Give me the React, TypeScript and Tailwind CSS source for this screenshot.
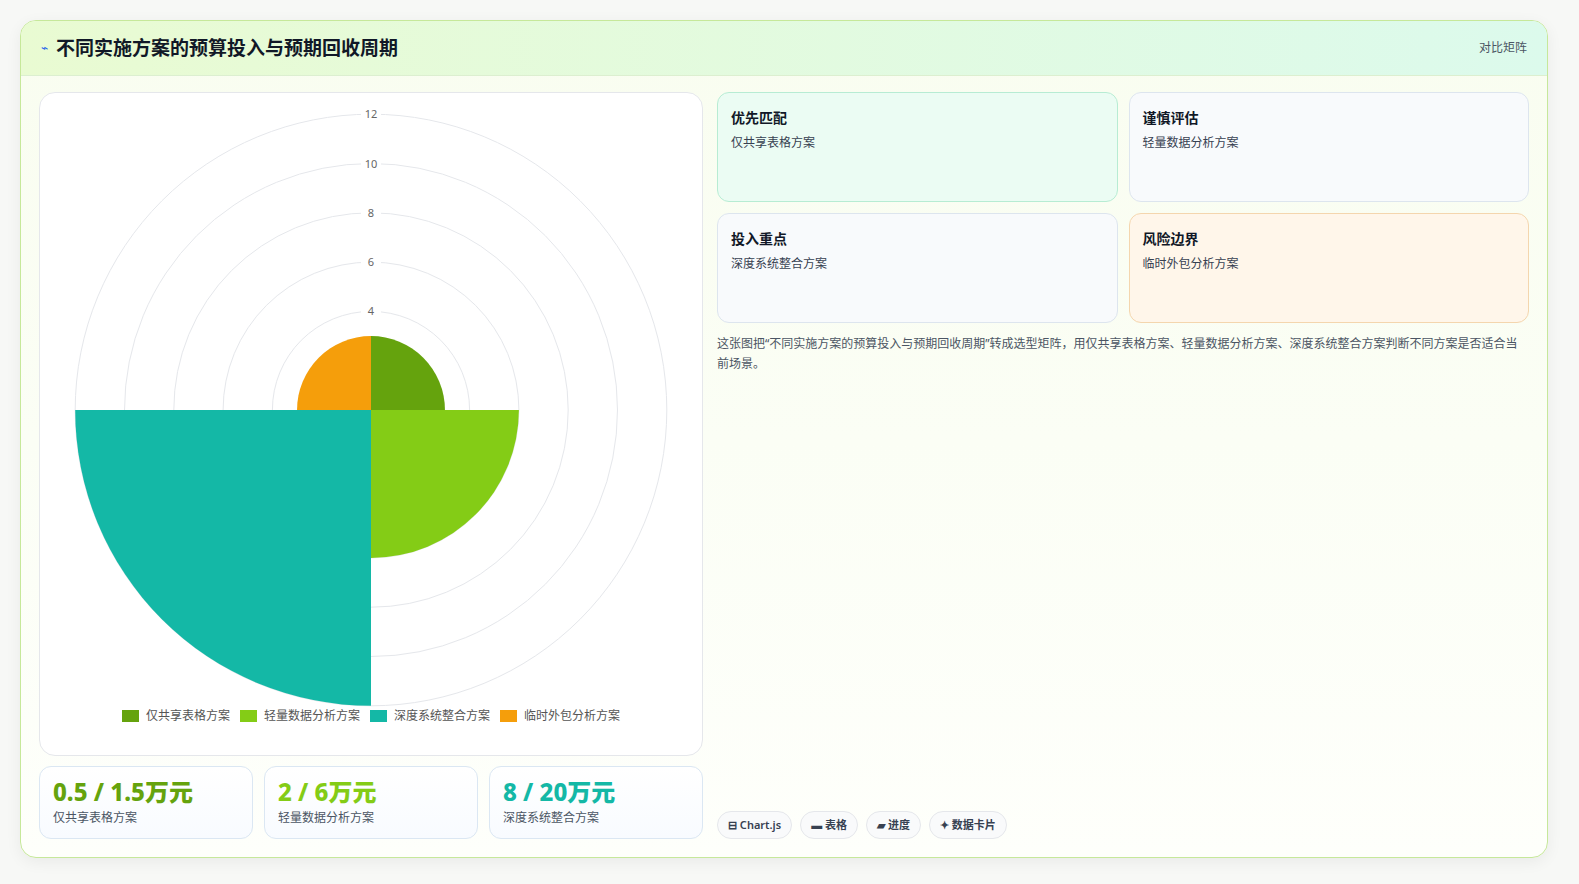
import React from "react";

const F = { fontFamily: '"Noto Sans", "Noto Sans CJK SC", sans-serif' };

function arc(cx: number, cy: number, r: number, a0: number, a1: number) {
  const p = (a: number) => [cx + r * Math.cos(a), cy + r * Math.sin(a)];
  const [x0, y0] = p(a0);
  const [x1, y1] = p(a1);
  return `M${cx} ${cy} L${x0} ${y0} A${r} ${r} 0 0 1 ${x1} ${y1} Z`;
}

function Chart() {
  const cx = 331, cy = 315, k = 24.65;
  const segs = [
    { v: 3, c: "#65a30d" },
    { v: 6, c: "#84cc16" },
    { v: 12, c: "#14b8a6" },
    { v: 3, c: "#f59e0b" },
  ];
  return (
    <svg width="662" height="620" className="block">
      {[2, 4, 6, 8, 10, 12].map((t) => (
        <circle key={t} cx={cx} cy={cy} r={t * k} fill="none" stroke="#e5e7eb" strokeWidth="1" />
      ))}
      {segs.map((s, i) => {
        const a0 = -Math.PI / 2 + (i * Math.PI) / 2;
        return <path key={i} d={arc(cx, cy, s.v * k, a0, a0 + Math.PI / 2)} fill={s.c} />;
      })}
      {[4, 6, 8, 10, 12].map((t) => (
        <g key={t}>
          <rect x={cx - 10} y={cy - t * k - 7} width="20" height="14" fill="white" />
          <text x={cx} y={cy - t * k + 4} textAnchor="middle" fontSize="11" fill="#666" fontFamily="Noto Sans, sans-serif">{t}</text>
        </g>
      ))}
    </svg>
  );
}

const legend = [
  ["#65a30d", "仅共享表格方案"],
  ["#84cc16", "轻量数据分析方案"],
  ["#14b8a6", "深度系统整合方案"],
  ["#f59e0b", "临时外包分析方案"],
];

export default function App() {
  return (
    <div style={F} className="w-[1579px] h-[884px] bg-[#f7f8f6] pt-[20px] pl-[20px]">
      <div className="w-[1528px] h-[838px] rounded-2xl border border-[#c6e89a] bg-gradient-to-b from-[#f9fdf0] via-[#fbfef5] to-[#fefffb] overflow-hidden flex flex-col shadow-[0_4px_16px_rgba(0,0,0,0.06)]">
        <div className="h-[55px] shrink-0 flex items-center justify-between px-[20px] bg-gradient-to-r from-[#e9fbd2] to-[#dcfaec] border-b border-[#dcefd0]">
          <div className="flex items-center gap-[8px]">
            <span className="text-[#2563eb] text-[12px]">⌁</span>
            <span className="text-[19px] font-bold text-[#111827]">不同实施方案的预算投入与预期回收周期</span>
          </div>
          <span className="text-[12px] text-[#4b5563]">对比矩阵</span>
        </div>
        <div className="flex-1 flex gap-[14px] px-[18px] pt-[16px] pb-[18px]">
          <div className="w-[664px] flex flex-col gap-[10px]">
            <div className="h-[664px] rounded-2xl bg-white border border-[#e5e7eb] flex flex-col items-center">
              <div className="mt-[2px]"><Chart /></div>
              <div className="flex items-center gap-[10px] -mt-[8px]">
                {legend.map(([c, t]) => (
                  <div key={t} className="flex items-center gap-[7px]">
                    <span className="w-[17px] h-[12px]" style={{ background: c }} />
                    <span className="text-[12px] text-[#555]">{t}</span>
                  </div>
                ))}
              </div>
            </div>
            <div className="flex gap-[11px]">
              {[
                ["0.5 / 1.5万元", "#65a30d", "仅共享表格方案"],
                ["2 / 6万元", "#84cc16", "轻量数据分析方案"],
                ["8 / 20万元", "#14b8a6", "深度系统整合方案"],
              ].map(([v, c, l]) => (
                <div key={l} className="w-[214px] h-[73px] rounded-xl border border-[#dbe7f3] bg-gradient-to-b from-white to-[#f8fbff] px-[13px] pt-[10px]">
                  <div className="text-[24px] font-extrabold leading-[30px]" style={{ color: c }}>{v}</div>
                  <div className="text-[12px] text-[#4b5563] mt-[2px]">{l}</div>
                </div>
              ))}
            </div>
          </div>
          <div className="flex-1 flex flex-col">
            <div className="grid grid-cols-2 gap-[11px]">
              {[
                ["优先匹配", "仅共享表格方案", "bg-[#ebfcf3] border-[#b7ecd3]"],
                ["谨慎评估", "轻量数据分析方案", "bg-[#f8fafc] border-[#dde5ee]"],
                ["投入重点", "深度系统整合方案", "bg-[#f8fafc] border-[#dde5ee]"],
                ["风险边界", "临时外包分析方案", "bg-[#fff6ea] border-[#f4d6ae]"],
              ].map(([h, s, cls]) => (
                <div key={h} className={`h-[110px] rounded-xl border px-[13px] pt-[14px] ${cls}`}>
                  <div className="text-[14px] font-bold text-[#111827]">{h}</div>
                  <div className="text-[12px] text-[#374151] mt-[6px]">{s}</div>
                </div>
              ))}
            </div>
            <p className="mt-[11px] text-[12px] leading-[20px] text-[#4b5563]">
              这张图把“不同实施方案的预算投入与预期回收周期”转成选型矩阵，用仅共享表格方案、轻量数据分析方案、深度系统整合方案判断不同方案是否适合当前场景。
            </p>
            <div className="mt-auto flex gap-[8px]">
              {["⊟ Chart.js", "▬ 表格", "▰ 进度", "✦ 数据卡片"].map((t) => (
                <span key={t} className="h-[28px] px-[10px] rounded-full border border-[#e5e7eb] bg-[#f9fafb] flex items-center text-[11px] font-semibold text-[#374151]">{t}</span>
              ))}
            </div>
          </div>
        </div>
      </div>
    </div>
  );
}
